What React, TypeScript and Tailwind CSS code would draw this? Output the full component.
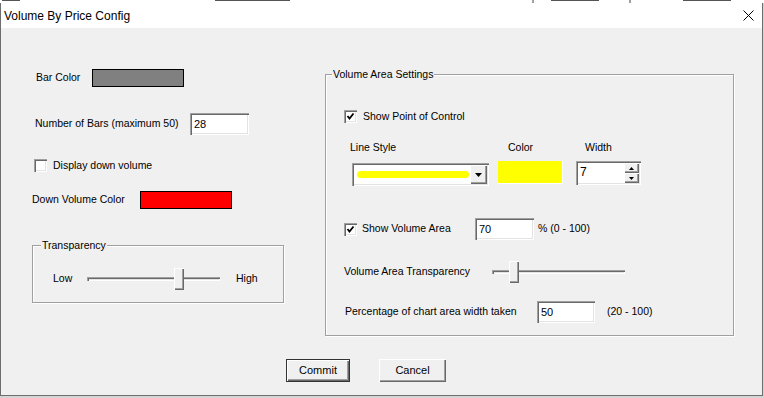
import React from "react";

// classic win32 bevels
const sunken =
  "shadow-[inset_1px_1px_0_#a0a0a0,inset_2px_2px_0_#696969,inset_-1px_-1px_0_#ffffff,inset_-2px_-2px_0_#e3e3e3]";
const raised =
  "shadow-[inset_1px_1px_0_#ffffff,inset_-1px_-1px_0_#696969,inset_-2px_-2px_0_#a0a0a0]";

function Checkbox({ checked }: { checked?: boolean }) {
  return (
    <div className={`w-[13px] h-[13px] bg-white shrink-0 ${sunken} flex items-center justify-center`}>
      {checked && (
        <svg width="9" height="9" viewBox="0 0 9 9">
          <polyline points="1.5,4 3.5,6.5 7.5,1.5" fill="none" stroke="#000" strokeWidth="1.8" />
        </svg>
      )}
    </div>
  );
}

function TextBox({ value, className }: { value: string; className: string }) {
  return (
    <div className={`h-[22px] bg-white ${sunken} flex items-center pl-[4px] text-[11px] ${className}`}>
      {value}
    </div>
  );
}

function Slider({ thumb }: { thumb: string }) {
  return (
    <div className="relative w-[133px] h-[22px] flex items-center shrink-0">
      <div className={`w-full h-[4px] bg-[#f0f0f0] ${sunken}`} />
      <div className={`absolute top-0 ${thumb} w-[10px] h-[22px] bg-[#f0f0f0] ${raised}`} />
    </div>
  );
}

function Legend({ children, ml }: { children: React.ReactNode; ml: string }) {
  return (
    <div className={`-mt-[7px] ${ml} w-fit px-[1px] bg-[#f0f0f0] leading-[13px]`}>{children}</div>
  );
}

const groupBorder =
  "border border-[#a0a0a0] shadow-[1px_1px_0_#ffffff,inset_1px_1px_0_#ffffff]";

function Arrow({ up }: { up?: boolean }) {
  return (
    <svg width="5" height="3" viewBox="0 0 5 3">
      <polygon points={up ? "2.5,0 5,3 0,3" : "0,0 5,0 2.5,3"} fill="#000" />
    </svg>
  );
}

export default function App() {
  return (
    <div className="w-[764px] h-[398px] overflow-hidden bg-[#d4d4d4] flex flex-col font-['Liberation_Sans',Arial,sans-serif] text-black">
      {/* app window behind, only a sliver shows */}
      <div className="h-[3px] bg-white flex items-start">
        <div className="ml-[2px] w-[18px] h-[1px] bg-[#555]" />
        <div className="ml-[195px] w-[75px] h-[1px] bg-[#555]" />
        <div className="ml-[242px] w-[2px] h-[3px] bg-[#a0a0a0]" />
        <div className="ml-[17px] w-[48px] h-[1px] bg-[#555]" />
        <div className="ml-[30px] w-[2px] h-[3px] bg-[#a0a0a0]" />
        <div className="ml-[52px] w-[48px] h-[1px] bg-[#555]" />
      </div>

      <div className="w-[763px] h-[393px] border-l border-r border-b border-[#6e6e6e] flex flex-col shrink-0">
        {/* title bar */}
        <div className="h-[25px] bg-white flex items-center justify-between pl-[3px] pr-[8px]">
          <span className="text-[12px]">Volume By Price Config</span>
          <svg width="11" height="11" viewBox="0 0 11 11">
            <path d="M0.5 0.5 L10.5 10.5 M10.5 0.5 L0.5 10.5" stroke="#000" strokeWidth="1" />
          </svg>
        </div>

        {/* body */}
        <div className="h-[367px] bg-[#f0f0f0] text-[10.5px] flex flex-col">
          <div className="flex items-start">
            {/* left column */}
            <div className="w-[324px] flex flex-col">
              <div className="mt-[41px] h-[18px] flex items-center pl-[35px]">
                <span className="w-[56px]">Bar Color</span>
                <div className="w-[92px] h-[18px] border border-black bg-[#808080]" />
              </div>
              <div className="mt-[26px] h-[22px] flex items-center pl-[34px]">
                <span className="w-[155px]">Number of Bars (maximum 50)</span>
                <TextBox value="28" className="w-[59px]" />
              </div>
              <div className="mt-[24px] h-[13px] flex items-center pl-[33px]">
                <Checkbox />
                <span className="ml-[6px]">Display down volume</span>
              </div>
              <div className="mt-[19px] h-[18px] flex items-center pl-[31px]">
                <span className="w-[108px]">Down Volume Color</span>
                <div className="w-[92px] h-[18px] border border-black bg-[#ff0000]" />
              </div>
              <div className={`mt-[36px] ml-[31px] w-[252px] h-[58px] ${groupBorder}`}>
                <Legend ml="ml-[8px]">Transparency</Legend>
                <div className="mt-[16px] h-[22px] flex items-center pl-[20px]">
                  <span className="w-[34px]">Low</span>
                  <Slider thumb="left-[87px]" />
                  <span className="ml-[16px]">High</span>
                </div>
              </div>
            </div>

            {/* right group */}
            <div className={`mt-[46px] w-[409px] h-[262px] ${groupBorder}`}>
              <Legend ml="ml-[6px]">Volume Area Settings</Legend>
              <div className="mt-[29px] h-[13px] flex items-center pl-[18px]">
                <Checkbox checked />
                <span className="ml-[6px]">Show Point of Control</span>
              </div>
              <div className="mt-[18px] flex leading-[13px] pl-[24px]">
                <span className="w-[158px]">Line Style</span>
                <span className="w-[77px]">Color</span>
                <span>Width</span>
              </div>
              <div className="mt-[7px] flex items-start pl-[26px]">
                <div className={`mt-[2px] w-[137px] h-[23px] bg-white ${sunken} flex items-center pl-[5px] pr-[2px]`}>
                  <div className="w-[112px] h-[7px] rounded-full bg-[#ffff00]" />
                  <div className={`ml-auto w-[17px] h-[19px] bg-[#f0f0f0] ${raised} flex items-center justify-center`}>
                    <svg width="7" height="4" viewBox="0 0 7 4">
                      <polygon points="0,0 7,0 3.5,4" fill="#000" />
                    </svg>
                  </div>
                </div>
                <div className="ml-[9px] w-[65px] h-[23px] bg-[#ffff00] border-r border-b border-white" />
                <div className={`ml-[13px] w-[65px] h-[24px] bg-white ${sunken} flex items-start p-[2px]`}>
                  <span className="pl-[2px] pt-[2px] text-[12px] leading-[14px]">7</span>
                  <div className="ml-auto flex flex-col w-[15px]">
                    <div className={`h-[10px] bg-[#f0f0f0] ${raised} flex items-center justify-center`}>
                      <Arrow up />
                    </div>
                    <div className={`h-[10px] bg-[#f0f0f0] ${raised} flex items-center justify-center`}>
                      <Arrow />
                    </div>
                  </div>
                </div>
              </div>
              <div className="mt-[32px] h-[22px] flex items-center pl-[18px]">
                <Checkbox checked />
                <span className="ml-[5px] w-[113px]">Show Volume Area</span>
                <TextBox value="70" className="w-[59px]" />
                <span className="ml-[4px]">% (0 - 100)</span>
              </div>
              <div className="mt-[21px] h-[22px] flex items-center pl-[18px]">
                <span className="w-[148px]">Volume Area Transparency</span>
                <Slider thumb="left-[17px]" />
              </div>
              <div className="mt-[18px] h-[22px] flex items-center pl-[19px]">
                <span className="w-[192px]">Percentage of chart area width taken</span>
                <TextBox value="50" className="w-[58px]" />
                <span className="ml-[12px]">(20 - 100)</span>
              </div>
            </div>
          </div>

          {/* buttons */}
          <div className="mt-[23px] flex pl-[285px] gap-[29px]">
            <button className={`w-[64px] h-[23px] bg-[#f0f0f0] border border-[#333] ${raised} text-[11px]`}>
              Commit
            </button>
            <button className={`w-[67px] h-[23px] bg-[#f0f0f0] ${raised} text-[11px]`}>Cancel</button>
          </div>
        </div>
      </div>
    </div>
  );
}
